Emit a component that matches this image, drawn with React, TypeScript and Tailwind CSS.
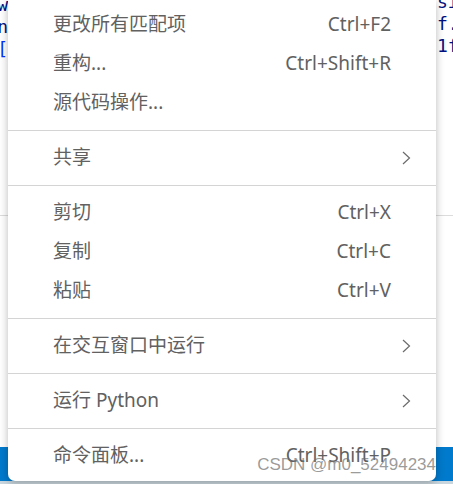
type Entry =
  | { kind: "item"; label: string; shortcut?: string; submenu?: boolean }
  | { kind: "sep" };

const entries: Entry[] = [
  { kind: "item", label: "更改所有匹配项", shortcut: "Ctrl+F2" },
  { kind: "item", label: "重构...", shortcut: "Ctrl+Shift+R" },
  { kind: "item", label: "源代码操作..." },
  { kind: "sep" },
  { kind: "item", label: "共享", submenu: true },
  { kind: "sep" },
  { kind: "item", label: "剪切", shortcut: "Ctrl+X" },
  { kind: "item", label: "复制", shortcut: "Ctrl+C" },
  { kind: "item", label: "粘贴", shortcut: "Ctrl+V" },
  { kind: "sep" },
  { kind: "item", label: "在交互窗口中运行", submenu: true },
  { kind: "sep" },
  { kind: "item", label: "运行 Python", submenu: true },
  { kind: "sep" },
  { kind: "item", label: "命令面板...", shortcut: "Ctrl+Shift+P" },
];

// bits of the code that peek out on both sides of the menu
const leftCode = [
  { t: "w", c: "text-[#001080]" },
  { t: "n", c: "text-[#001080]" },
  { t: "[", c: "text-[#0431fa]" },
];
const rightCode = ["si", "f.", "1f"];

function Chevron() {
  return (
    <svg width="10" height="16" viewBox="0 0 10 16" className="text-[#6b6b6b]">
      <polyline points="2,2 8.5,8 2,14" fill="none" stroke="currentColor" strokeWidth="1.2" />
    </svg>
  );
}

export default function App() {
  return (
    <div className="relative w-[453px] h-[484px] overflow-hidden bg-white flex flex-col">
      {/* editor behind the menu */}
      <div className="flex-1 flex flex-col">
        <div className="h-[216px] flex justify-between border-b border-[#dcdcdc] font-['DejaVu_Sans_Mono','Liberation_Mono',monospace] text-[18px] leading-[22px]">
          <div className="w-[8px] overflow-hidden -mt-[6px] flex flex-col items-end">
            {leftCode.map((l, i) => (
              <div key={i} className={l.c}>{l.t}</div>
            ))}
          </div>
          <div className="w-[16px] overflow-hidden -mt-[9px] text-[#001080]">
            {rightCode.map((l, i) => (
              <div key={i} className="whitespace-nowrap">{l}</div>
            ))}
          </div>
        </div>
        <div className="flex-1 bg-white" />
      </div>
      <div className="h-[34px] bg-[#007acc]" />
      <div className="h-[3px] bg-[#c9d6dd]" />

      {/* context menu */}
      <div className="absolute left-[8px] top-0 w-[428px] h-[481px] bg-white rounded-b-[7px] shadow-[0_2px_8px_rgba(0,0,0,0.28)] pt-[5px] font-['Noto_Sans','Noto_Sans_CJK_SC',sans-serif] text-[19px] text-[#616161]">
        {entries.map((e, i) =>
          e.kind === "sep" ? (
            <div key={i} className="h-[16px] flex items-center">
              <div className="w-full h-px bg-[#d4d4d4]" />
            </div>
          ) : (
            <div key={i} className="h-[39px] flex items-center pl-[45px] pr-[25px]">
              <span className="flex-1 whitespace-nowrap">{e.label}</span>
              {e.shortcut && <span className="whitespace-nowrap">{e.shortcut}</span>}
              <span className="w-[20px] flex justify-end">{e.submenu && <Chevron />}</span>
            </div>
          )
        )}
      </div>

      {/* watermark */}
      <div className="absolute right-[17px] top-[455px] font-['Liberation_Sans',Arial,sans-serif] text-[17px] leading-[20px] text-[rgba(110,110,110,0.7)] whitespace-nowrap">
        CSDN @m0_52494234
      </div>
    </div>
  );
}
